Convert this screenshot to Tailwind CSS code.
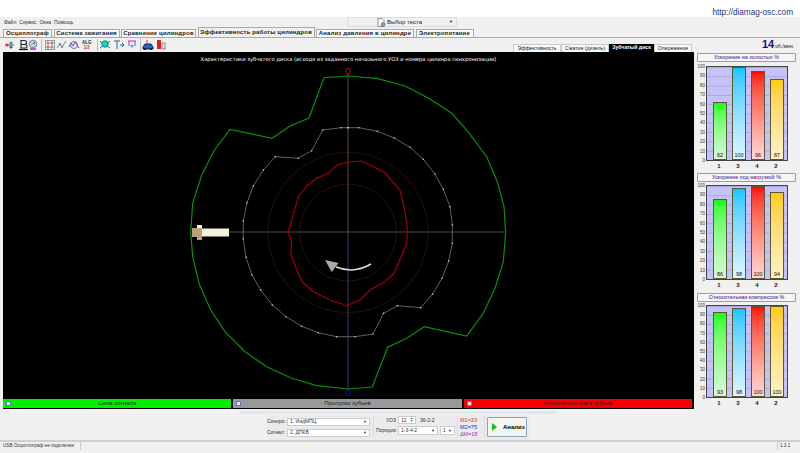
<!DOCTYPE html>
<html lang="ru">
  <head>
    <meta charset="UTF-8" />
    <title>Diamag</title>
    <script src="https://cdn.jsdelivr.net/npm/@tailwindcss/browser@4"></script>
  </head>
  <body class="bg-white">
    <div class="w-[800px] h-[453px] overflow-hidden flex flex-col font-['Liberation_Sans',sans-serif] text-[#222] whitespace-nowrap">
      <!-- top strip -->
      <div class="h-[17px] flex justify-end items-start pr-[7px] pt-[8px]">
        <span class="text-[8.2px] leading-[10px] text-[#17337f]">http://diamag-osc.com</span>
      </div>

      <div class="flex-1 bg-[#f0f0f0] flex flex-col">
        <!-- menu -->
        <div class="h-[11px] flex items-center relative">
          <div class="flex gap-[3px] pl-[4px] text-[5px] text-[#333]">
            <span>Файл</span><span>Сервис</span><span>Окна</span><span>Помощь</span>
          </div>
          <div class="absolute left-[347px] top-0 w-[110px] h-[10px] border border-[#ddd] rounded-[2px] flex items-center text-[6px]">
            <svg class="ml-[29px] mr-[1px]" width="9" height="9" viewBox="0 0 9 9"><path d="M1 .5h4l2 2v6H1z" fill="#fff" stroke="#666" stroke-width=".7"/><circle cx="6" cy="6.5" r="2" fill="#8a9" stroke="#555" stroke-width=".5"/></svg>
            <span>Выбор теста</span>
            <span class="ml-auto mr-[3px] text-[4px]">▼</span>
          </div>
        </div>

        <!-- tabs -->
        <div class="h-[10px] flex items-end pl-[3px] gap-[1.5px] text-[6px] font-bold tracking-[.15px] text-[#222] border-b border-[#aaa]">
          <div class="w-[49px] h-[8px] bg-[#f8f8f8] border border-b-0 border-[#aaa] flex items-center justify-center">Осциллограф</div>
          <div class="w-[66px] h-[8px] bg-[#f8f8f8] border border-b-0 border-[#aaa] flex items-center justify-center">Система зажигания</div>
          <div class="w-[75px] h-[8px] bg-[#f8f8f8] border border-b-0 border-[#aaa] flex items-center justify-center">Сравнение цилиндров</div>
          <div class="w-[117px] h-[10px] bg-[#f0f0f0] border border-b-0 border-[#aaa] flex items-center justify-center">Эффективность работы цилиндров</div>
          <div class="w-[98px] h-[8px] bg-[#f8f8f8] border border-b-0 border-[#aaa] flex items-center justify-center">Анализ давления в цилиндре</div>
          <div class="w-[58px] h-[8px] bg-[#f8f8f8] border border-b-0 border-[#aaa] flex items-center justify-center">Электропитание</div>
        </div>

        <!-- toolbar -->
        <div class="h-[14px] flex items-center relative pl-[4px]">
          <svg width="166" height="12" viewBox="0 0 166 12">
            <g fill="none" stroke-width="1">
              <path d="M1 6h9" stroke="#555"/><circle cx="3" cy="6" r="1.6" fill="#e33"/><circle cx="7" cy="4" r="1.6" fill="#3a3"/><circle cx="7" cy="8" r="1.6" fill="#36c"/>
              <path d="M15 10.5h9" stroke="#111" stroke-width="1.2"/><path d="M17 1.5h3.5q2 0 2 2t-2 2h-3.5zM20.5 5.500q2.500 0 2.500 2t-2.500 1.500h-3.500v-3.500" stroke="#222" stroke-width="1.100"/>
              <circle cx="29" cy="5" r="3.800" stroke="#789" fill="#bcd"/><path d="M29 5l2-2" stroke="#335"/><path d="M26 10h6" stroke="#a3c" stroke-width="1.600"/>
              <path d="M37.500 0v12" stroke="#bbb"/>
              <rect x="41.500" y="1.500" width="9" height="9" stroke="#999" fill="#fff"/><path d="M43 3h2v2h-2zM47 7h2v2h-2z" stroke="#d33" stroke-width=".8"/><path d="M47 3h2v2h-2zM43 7h2v2h-2z" stroke="#555" stroke-width=".8"/>
              <path d="M53 9l3-4 2 3 4-6" stroke="#2a8"/><circle cx="56" cy="5" r=".9" fill="#36c"/><circle cx="58" cy="8" r=".9" fill="#d33"/>
              <path d="M65 8l2-4 2 3 2-4 2 3 2 3" stroke="#83c"/><circle cx="70" cy="6" r="3.500" stroke="#58a"/>
              <path d="M93.500 0v12" stroke="#bbb"/>
              <circle cx="101" cy="5" r="3.200" fill="#2cb" stroke="#188"/><path d="M96 2l2 2M106 2l-2 2M96 9l3-2M106 9l-3-2" stroke="#188"/>
              <path d="M110 2h6M113 2v8M116 6h4M118 4l2 2-2 2" stroke="#26a"/>
              <path d="M124 2h8M125 2v5M131 2v5" stroke="#b3c"/><circle cx="128" cy="7" r="1.500" fill="#3bd"/>
              <path d="M136.500 0v12" stroke="#bbb"/>
              <path d="M139 8l2-3h6l2 3v2h-10z" fill="#26b" stroke="#124"/><path d="M143 1v4" stroke="#d33"/><circle cx="141" cy="10" r="1" fill="#111"/><circle cx="147" cy="10" r="1" fill="#111"/>
              <rect x="153" y="1" width="4" height="9" fill="#d22"/><rect x="158" y="4" width="3" height="6" stroke="#888" fill="#eee"/>
            </g>
          </svg>
          <span class="absolute left-[82px] top-[2px] text-[4.5px] leading-[5px] font-bold text-center text-[#223]">ALG<br /><span class="text-[#c33]">1/2</span></span>
          <div class="absolute right-[108px] bottom-0 h-[9px] flex items-end text-[5.2px]">
            <div class="w-[48px] h-[8px] flex items-center justify-center bg-[#f8f8f8] border border-b-0 border-[#ccc]">Эффективность</div>
            <div class="w-[48px] h-[8px] flex items-center justify-center bg-[#f8f8f8] border border-b-0 border-[#ccc]">Сжатие (дизель)</div>
            <div class="w-[45px] h-[8px] flex items-center justify-center bg-black text-white font-bold">Зубчатый диск</div>
            <div class="w-[38px] h-[8px] flex items-center justify-center bg-[#f8f8f8] border border-b-0 border-[#ccc]">Опережение</div>
          </div>
          <div class="absolute left-[762px] top-0 flex items-baseline gap-[1px]">
            <span class="text-[11px] leading-[12px] font-bold text-[#12127a]">14</span>
            <span class="text-[5px]">об./мин.</span>
          </div>
        </div>

        <!-- main -->
        <div class="h-[357px] flex pl-[3px]">
          <div class="w-[691px] bg-black flex flex-col relative">
            <div class="absolute top-[4px] left-0 w-full text-center text-[5.2px] leading-[7px] text-white font-['DejaVu_Sans',sans-serif]">Характеристики зубчатого диска (исходя из заданного начального УОЗ и номера цилинра синхронизации)</div>
            <svg id="wheel" class="flex-1" viewBox="3 52 691 347" fill="none"></svg>
            <!-- legend -->
            <div class="h-[9px] mb-[1px] flex gap-[2px] pr-[2px] text-[6px]">
              <div class="w-[229px] bg-[#00f000] flex items-center relative"><span class="absolute left-[3px] w-[5px] h-[5px] bg-[#dde8f8] border border-[#5080c0]"></span><span class="mx-auto">Сила сигнала</span></div>
              <div class="w-[229px] bg-[#999] flex items-center relative"><span class="absolute left-[3px] w-[5px] h-[5px] bg-[#dde8f8] border border-[#5080c0]"></span><span class="mx-auto">Пропуски зубьев</span></div>
              <div class="w-[229px] bg-[#f80000] flex items-center relative"><span class="absolute left-[3px] w-[5px] h-[5px] bg-[#dde8f8] border border-[#5080c0]"></span><span class="mx-auto">Отклонение шага зубьев</span></div>
            </div>
          </div>
          <!-- charts -->
          <div id="charts" class="w-[103px] ml-[1px] flex flex-col"></div>
        </div>

        <!-- control panel -->
        <div class="h-[33px] border-b-2 border-[#d0d0d0] flex flex-col items-start pl-[240px]">
          <div class="w-[317px] h-[3px] mt-[2px] bg-[#dfe6f0] rounded-[1px]"></div>
          <div class="ml-[27px] mt-[1px] w-[263px] h-[26px] bg-[#ebebeb] rounded-[2px] flex items-center text-[5px] text-[#333]">
            <div class="w-[106px] flex flex-col gap-[3px]">
              <div class="flex items-center"><span class="w-[18px] text-right mr-[2px]">Синхро:</span><span class="w-[83px] h-[8px] bg-white border border-[#ccc] flex items-center px-[2px]">1. ИндМПЦ<i class="ml-auto not-italic text-[4px]">▼</i></span></div>
              <div class="flex items-center"><span class="w-[18px] text-right mr-[2px]">Сигнал:</span><span class="w-[83px] h-[8px] bg-white border border-[#ccc] flex items-center px-[2px]">2. ДПКВ<i class="ml-auto not-italic text-[4px]">▼</i></span></div>
            </div>
            <div class="w-[84px] border-l border-[#ddd] h-[22px] flex flex-col gap-[2px] pl-[2px]">
              <div class="flex items-center"><span class="w-[20px] text-right mr-[2px]">УОЗ</span><span class="w-[18px] h-[8px] bg-white border border-[#ccc] flex items-center px-[2px]">12<i class="ml-auto not-italic text-[3px] leading-[3px]">▲<br />▼</i></span><span class="ml-[4px]">36-2-2</span></div>
              <div class="flex items-center"><span class="w-[20px] text-right mr-[2px]">Порядок:</span><span class="w-[40px] h-[9px] bg-white border border-[#ccc] flex items-center px-[2px]">1-3-4-2<i class="ml-auto not-italic text-[4px]">▼</i></span><span class="ml-[2px] w-[15px] h-[9px] bg-white border border-[#ccc] flex items-center px-[2px]">1<i class="ml-auto not-italic text-[4px]">▼</i></span></div>
            </div>
            <div class="w-[27px] border-l border-[#ddd] h-[22px] flex flex-col justify-center pl-[2px] text-[5.5px] leading-[7px]">
              <span class="text-[#e03040]">M1=33</span><span class="text-[#2020e0]">M2=75</span><span class="text-[#a030c0]">∆M=18</span>
            </div>
            <div class="border-l border-[#ddd] h-[22px] flex items-center pl-[2px]">
              <div class="w-[40px] h-[20px] border border-[#8aa4bc] rounded-[1px] bg-[#f4f4f0] flex items-center">
                <span class="ml-[4px] w-0 h-0 border-y-[4px] border-y-transparent border-l-[5px] border-l-[#10c010]"></span>
                <span class="ml-[6px] font-bold text-[6px] text-black">Анализ</span>
              </div>
            </div>
          </div>
        </div>

        <!-- status bar -->
        <div class="flex-1 flex text-[4.6px] text-[#333] pb-[3px] px-[3px]">
          <div class="w-[78px] border-r border-[#ccc] flex items-center">USB Осциллограф не подключен</div>
          <div class="flex-1"></div>
          <div class="w-[20px] border-l border-[#ccc] flex items-center pl-[2px]">1.3.1</div>
        </div>
      </div>
    </div>

    <script>
      //---chart traces picked off the screenshot, in page pixels
      const green = "348,76 324,77.700 309,118 290,126 272,138.300 230,129.300 214,150.700 201.700,175 192.700,203 190.700,232 192.700,256.700 199.300,284.300 210.700,310 225,331.700 245,351.700 266.700,366.700 291.700,378.300 316.700,385.700 348,389 372.300,387 387.700,347.300 406.700,338.300 424.300,326.700 466.700,336 483.300,313.300 495,288.300 503.300,261.700 505.700,232 504,206.700 497.300,181.700 486.700,156.700 468,131.700 451.700,113.300 430,99 405,86 376.700,78.300 348,76";
      const white = "348,127.700 341,127.700 322.700,130 311.700,150.700 298.300,158.300 275.300,156.700 263.300,170 253.300,186 247,202.700 243.300,221 243.300,239 246,257.300 252,275 260.700,290 272.300,305 286,316.700 301.700,326.300 318.300,332.700 336.700,336.700 355,336.700 373,334 383.700,313.300 397.300,305.700 420.700,307.700 432.700,294 442,278.300 448.700,261 452.300,243.300 452.300,225 450,206.700 443.300,189.300 435,174 423.300,159.300 410,147.300 394.300,138 377.300,131.300 359,127.700 348,127.700";
      const red = "348,162 337.700,164.700 328.300,173.300 316.700,178.300 306.700,186 298.300,196.700 292.700,216.700 288.500,231.700 291.700,243.300 290.700,253.300 296.700,270 302.700,282.300 313.300,291.700 330,300 346.700,305.700 360,300 370,290 385,281.700 394,273.300 401,257.300 406.700,243.300 407.300,229 405,211.700 400,190 384.300,172.300 361.700,161 348,162";

      let svg = "";
      svg += '<circle cx="348" cy="232.500" r="48.500" stroke="#2e1414" stroke-width=".8"/>';
      svg += '<circle cx="348" cy="232.500" r="80" stroke="#2e1414" stroke-width=".8"/>';
      svg += '<path d="M348 74V232" stroke="#5c4444"/><path d="M348 232V390" stroke="#3c3c66"/>';
      svg += '<path d="M229 232H506" stroke="#5a5a5a" stroke-width=".8"/>';
      svg += '<circle cx="348" cy="71" r="2.500" stroke="#b01020"/><circle cx="348" cy="393" r="2.500" stroke="#1010b0"/>';
      svg += '<polyline points="' + green + '" stroke="#0a900a" stroke-width="1.200"/>';
      svg += '<polyline points="' + white + '" stroke="#777" stroke-width=".8"/>';
      white.split(" ").forEach((p) => {
        const [x, y] = p.split(",");
        svg += '<circle cx="' + x + '" cy="' + y + '" r=".7" fill="#ddd"/>';
      });
      svg += '<polyline points="' + red + '" stroke="#a00010" stroke-width="1.200"/>';
      //----rotation arrow
      svg += '<path d="M371 264Q354 274 336 267" stroke="#ddd" stroke-width="1.500"/><path d="M325 260L338.500 263L331.700 272Z" fill="#aaa"/>';
      //----sensor bolt
      svg += '<rect x="197" y="225" width="5" height="3" fill="#eee"/><rect x="192" y="228" width="10" height="9" fill="#b8a078"/><rect x="197" y="237" width="5" height="3" fill="#b8a078"/><rect x="202" y="228.500" width="27" height="8" fill="#f5f2dc"/>';
      document.getElementById("wheel").innerHTML = svg;

      const charts = [
        { title: "Ускорение на холостых %", values: [62, 100, 96, 87], h: "h-[95px]", block: "h-[120px]", gap: "mt-[4px]" },
        { title: "Ускорение под нагрузкой %", values: [86, 98, 100, 94], h: "h-[95px]", block: "h-[120px]", gap: "mt-[3px]" },
        { title: "Относительная компрессия %", values: [93, 98, 100, 100], h: "h-[93px]", block: "h-[117px]", gap: "mt-[3px]" },
      ];
      const barColors = [
        "from-[#00ff00] to-[#d8f8d8]",
        "from-[#00c8ff] to-[#dcf6ff]",
        "from-[#ff0000] to-[#ffd8d8]",
        "from-[#ffcc00] to-[#fff4c8]",
      ];
      const names = ["1", "3", "4", "2"];
      let content = "";
      charts.forEach((c) => {
        let ticks = "";
        for (let t = 100; t >= 0; t -= 10) ticks += "<span>" + t + "</span>";
        let bars = "";
        let labels = "";
        c.values.forEach((v, i) => {
          bars += '<div class="w-[14px] border border-[#5a5a30] bg-gradient-to-b ' + barColors[i] + ' flex items-end justify-center text-[5.500px] leading-[8px] text-[#111]" style="height:' + v + '%">' + v + "</div>";
          labels += '<span class="w-[14px] text-center">' + names[i] + "</span>";
        });
        content +=
          '<div class="' + c.block + ' flex flex-col pt-[1px]">' +
          '<div class="h-[9px] mx-[2px] border border-[#8aa0c0] rounded-[1px] bg-[#f4f6fa] flex items-center justify-center text-[5.400px] text-[#401080]">' + c.title + "</div>" +
          '<div class="flex ' + c.gap + ' ml-[2px]">' +
          '<div class="w-[9px] ' + c.h + ' flex flex-col justify-between items-end pr-[1px] text-[4.500px] leading-[1px] text-[#333]">' + ticks + "</div>" +
          '<div class="w-[82px] ' + c.h + ' border border-[#444] bg-[#c6c2f8] bg-[linear-gradient(#aaa6e4_1px,transparent_1px)] bg-[size:100%_10%] flex items-end gap-[5px] pl-[6px]">' + bars + "</div>" +
          "</div>" +
          '<div class="flex gap-[5px] pl-[17px] mt-[1px] text-[6px] font-bold text-[#222]">' + labels + "</div>" +
          "</div>";
      });
      document.getElementById("charts").innerHTML = content;
    </script>
  </body>
</html>
